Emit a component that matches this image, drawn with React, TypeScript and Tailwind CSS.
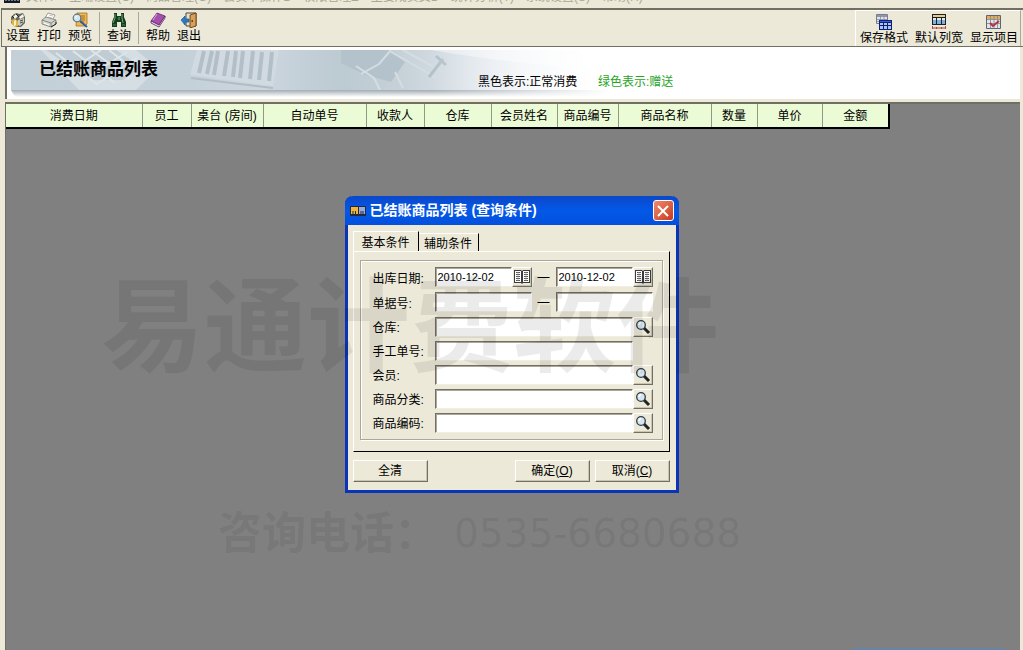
import type { ReactNode } from 'react'

const menus = ['文件F', '主端设置(C)', '商品管理(G)', '会员卡操作B', '权限管理Z', '主要成员费B', '统计分析(T)', '系统设置(S)', '帮助(H)']

const columns = [
  { label: '消费日期', width: 'w-[136px]' },
  { label: '员工', width: 'w-[49px]' },
  { label: '桌台 (房间)', width: 'w-[72px]' },
  { label: '自动单号', width: 'w-[103px]' },
  { label: '收款人', width: 'w-[58px]' },
  { label: '仓库', width: 'w-[67px]' },
  { label: '会员姓名', width: 'w-[66px]' },
  { label: '商品编号', width: 'w-[61px]' },
  { label: '商品名称', width: 'w-[93px]' },
  { label: '数量', width: 'w-[46px]' },
  { label: '单价', width: 'w-[65px]' },
  { label: '金额', width: 'w-[67px]' },
]

const raised =
  'border border-t-white border-l-white border-r-[#716f64] border-b-[#716f64] bg-[#ece9d8] shadow-[inset_-1px_-1px_0_#c9c5b2]'
const sunken =
  'shrink-0 border border-t-[#716f64] border-l-[#716f64] border-r-white border-b-[#f1efe2] bg-white shadow-[inset_1px_1px_0_#aca899] outline-none'

function Icon({ children }: { children: ReactNode }) {
  return (
    <svg viewBox="0 0 16 16" className="size-4 shrink-0" aria-hidden="true">
      {children}
    </svg>
  )
}

function SetupIcon() {
  return (
    <Icon>
      <path d="M1 5 4 2l3-1 2 1 4-1 2 4v6l-4 4H6L1 11z" fill="#66675f" />
      <path d="M3 5 6 2l2 2-3 3zM9 5l4-3 1 3-4 2z" fill="#f4f3e8" />
      <path d="M8 8l6-2v4l-4 4-2-1z" fill="#c9cac2" />
      <path d="M1 8l4-1 3 2v5l-3 1-3-3z" fill="#e0b347" />
      <path d="M4 9l2-1v5l-2 1z" fill="#fff3c4" />
      <path d="M10 9l3-1M10 11l3-1" stroke="#4a4a45" />
      <path d="M2 4l2 2M6 2l3 3" stroke="#222" />
    </Icon>
  )
}

function PrinterIcon() {
  return (
    <Icon>
      <path d="M7 1l7 2-3 6-7-3z" fill="#fff" stroke="#88887e" strokeWidth=".8" />
      <path d="M8 3l4 1M7 5l4 1" stroke="#a9aaa4" strokeWidth=".7" />
      <path d="M1 8l4-3 10 3v4l-5 3L1 12z" fill="#d3d4d0" stroke="#77786f" strokeWidth=".8" />
      <path d="M1 8l9 3 5-3M10 11v4" fill="none" stroke="#77776f" strokeWidth=".8" />
      <path d="M3 11l5 2" stroke="#fff" />
      <path d="M10 15l5-3v-2" fill="none" stroke="#222" />
    </Icon>
  )
}

function PreviewIcon() {
  return (
    <Icon>
      <path d="M5 1h10v11l-2 2H4z" fill="#edb957" stroke="#a8701b" strokeWidth=".8" />
      <path d="M8 4h5M9 6h4M9 8h4M8 10h4" stroke="#8c5b19" strokeWidth=".8" />
      <circle cx="5" cy="6" r="3.8" fill="#cfe9f6" stroke="#66757d" strokeWidth="1.2" />
      <path d="M3 6l2-2" stroke="#fff" />
      <path d="M8 9l7 6" stroke="#285d9e" strokeWidth="2" />
    </Icon>
  )
}

function BinocularsIcon() {
  return (
    <Icon>
      <path d="M3 1h3v3h4V1h3v4l2 5v5h-5v-5H6v5H1v-5l2-5z" fill="#173d20" />
      <path d="M4 2v4L2 11M11 2v4l1 5" fill="none" stroke="#6fae72" />
      <path d="M7 5h2v3H7z" fill="#3f7a46" />
      <path d="M2 13h3M11 13h3" stroke="#4c8652" />
    </Icon>
  )
}

function BookIcon() {
  return (
    <Icon>
      <path d="M7 1l8 3-6 9-8-4z" fill="#a550ae" stroke="#65246d" strokeWidth=".8" />
      <path d="M7 2l-4 6" stroke="#dba2df" />
      <path d="M1 9l8 4 6-9v2l-6 9-8-4z" fill="#f2e9ef" stroke="#501b57" strokeWidth=".8" />
    </Icon>
  )
}

function ExitIcon() {
  return (
    <Icon>
      <path d="M5 1h10v13H5z" fill="#e8e4d2" stroke="#444" />
      <path d="M9 3l6-2v13l-6 2z" fill="#d9a05c" stroke="#6c3e0d" strokeWidth=".9" />
      <path d="M10.5 9h1.5" stroke="#46280a" strokeWidth="1.3" />
      <path d="M0 8l4-4v3h4v3H4v3z" fill="#2a7fc9" stroke="#154b82" strokeWidth=".6" />
    </Icon>
  )
}

function SaveFormatIcon() {
  return (
    <Icon>
      <path d="M.5 .5h11v9H.5z" fill="#dfe3ec" stroke="#777d8c" />
      <path d="M1 1h10v2H1z" fill="#8e97ab" />
      <path d="M1 5.500h10M1 7.500h10M4.500 2v7M8 2v7" stroke="#858c9b" strokeWidth=".8" />
      <path d="M3 6h13v10H3z" fill="#10206f" />
      <path d="M4 9h3v2H4zM8 9h3v2H8zM12 9h3v2h-3zM4 12h3v3H4zM8 12h3v3H8zM12 12h3v3h-3z" fill="#a9c5ff" />
      <path d="M4 7h11v1H4z" fill="#3b59d8" />
    </Icon>
  )
}

function ColumnWidthIcon() {
  return (
    <Icon>
      <path d="M1 0h14v11H1z" fill="#18202b" />
      <path d="M2 1h12v2H2z" fill="#e9cc74" />
      <path d="M2 4h3v2H2zM6 4h4v2H6zM11 4h3v2h-3z" fill="#dce9f3" />
      <path d="M2 6h3v4H2zM6 6h4v4H6zM11 6h3v4h-3z" fill="#82b0d5" />
      <path d="M1.500 12v3M14.500 12v3M2 14h12M5.500 13v2M10.500 13v2" stroke="#a54b43" fill="none" />
    </Icon>
  )
}

function ShowItemsIcon() {
  return (
    <Icon>
      <path d="M.5 1.500h14v13H.5z" fill="#dde5ea" stroke="#5b6773" />
      <path d="M1 2h13v3H1z" fill="#e4ac55" />
      <path d="M1 5.500h13M1 9.500h13M4.500 2v12M8 2v12M11.500 2v12" stroke="#7c8893" strokeWidth=".8" />
      <path d="M4 9l3 3 6-5" fill="none" stroke="#b92d3e" strokeWidth="2" />
    </Icon>
  )
}

function LensIcon() {
  return (
    <Icon>
      <path d="M9 9l5 5" stroke="#222" strokeWidth="3" />
      <circle cx="6" cy="6" r="4.300" fill="#d3e6f2" stroke="#353b42" strokeWidth="1.300" />
      <path d="M4 6q0-2 2-2.500" fill="none" stroke="#fff" strokeWidth="1.300" />
    </Icon>
  )
}

function LedgerIcon() {
  return (
    <Icon>
      <path d="M0 1h7l1 1 1-1h7v13H9l-1 1-1-1H0z" fill="#3b3b3b" />
      <path d="M1 2h6v11H1zM9 2h6v11H9z" fill="#fff" />
      <path d="M2 3.500h4M2 5.500h4M2 7.500h4M2 9.500h4M2 11.500h4M10 3.500h4M10 5.500h4M10 7.500h4M10 9.500h4M10 11.500h4" stroke="#555" />
      <path d="M4 3v9M12 3v9" stroke="#9d9d9d" strokeWidth=".7" />
    </Icon>
  )
}

function ToolButton({ label, icon }: { label: string; icon: ReactNode }) {
  return (
    <button type="button" className="flex shrink-0 flex-col items-center whitespace-nowrap leading-4">
      {icon}
      {label}
    </button>
  )
}

const Separator = () => <div className="h-8 w-px bg-[#aca899]" />

function BannerArt() {
  return (
    <svg viewBox="0 0 600 47" preserveAspectRatio="none" className="h-[47px] w-[600px]" aria-hidden="true">
      <defs>
        <linearGradient id="base" x1="0" x2="1">
          <stop offset="0" stopColor="#c3d0d7" />
          <stop offset=".3" stopColor="#c5d1d8" />
          <stop offset=".42" stopColor="#ccd6df" />
          <stop offset=".55" stopColor="#bccad2" />
          <stop offset=".65" stopColor="#c6d1d8" />
          <stop offset=".8" stopColor="#e2e8ee" />
          <stop offset="1" stopColor="#fff" />
        </linearGradient>
        <linearGradient id="shadow" y1="0" y2="1" x1="0" x2="0">
          <stop offset="0" stopColor="#a3adb3" />
          <stop offset="1" stopColor="#fff" />
        </linearGradient>
        <linearGradient id="fade" x1="0" x2="1">
          <stop offset=".7" stopColor="#fff" stopOpacity="0" />
          <stop offset="1" stopColor="#fff" />
        </linearGradient>
      </defs>
      <path d="M0 0h600v40H0z" fill="url(#base)" />
      <path d="M30 0h95l22 18-22 22H68z" fill="#d5dee3" />
      <path d="M35 0h70l25 17-18 13H78z" fill="#c0ccd3" />
      <path d="M45 3l42 32M62 1l42 32M80 0l38 28M98 0l28 22M60 20L90 0M72 30l44-28M86 34l40-26" stroke="#dde5e9" strokeWidth="2" fill="none" />
      <path d="M186 0l-7 25 83 11 6-36z" fill="#d0dae0" />
      <path
        d="M193 1l-5 22M201 1l-5 23M207 1l-4 24M217 1l-4 25M225 1l-3 26M232 1l-3 27M242 1l-3 28M251 2l-3 28M261 2l-3 29"
        stroke="#b3bfc7"
        strokeWidth="4"
        fill="none"
      />
      <path d="M180 28l82 10" stroke="#b0bdc5" strokeWidth="2" />
      <path d="M330 0h48l16 12-14 20-25-7-25-12z" fill="#b4c2cb" />
      <path d="M350 24l18-10 12-14M345 16l18 12 6 12M380 2l46 26M392 0l40 22M384 22l8 16" stroke="#d3dde2" strokeWidth="2" fill="none" />
      <path d="M432 9l-14 18M425 6l10 9" stroke="#b3c1c9" strokeWidth="3" />
      <path d="M420 0h180v20Q500 14 420 0z" fill="#fff" opacity=".4" />
      <path d="M0 40h600v7H4z" fill="url(#shadow)" />
      <path d="M0 0h600v47H0z" fill="url(#fade)" />
    </svg>
  )
}

function Label({ htmlFor, children }: { htmlFor: string; children: ReactNode }) {
  return (
    <label htmlFor={htmlFor} className="w-[62px] shrink-0 self-end whitespace-nowrap leading-[18px]">
      {children}
    </label>
  )
}

function PickButton({ label, children }: { label: string; children: ReactNode }) {
  return (
    <button type="button" aria-label={label} className={`flex size-5 shrink-0 items-center justify-center ${raised}`}>
      {children}
    </button>
  )
}

function DateInput({ id, label }: { id: string; label: string }) {
  return (
    <div className="flex">
      <input id={id} aria-label={label} defaultValue="2010-12-02" className={`h-5 w-[77px] pl-0.5 text-[11px] ${sunken}`} />
      <PickButton label="选择日期">
        <LedgerIcon />
      </PickButton>
    </div>
  )
}

const fields = [
  { id: 'warehouse', label: '仓库:', lookup: true },
  { id: 'manual-no', label: '手工单号:', lookup: false },
  { id: 'member', label: '会员:', lookup: true },
  { id: 'category', label: '商品分类:', lookup: true },
  { id: 'code', label: '商品编码:', lookup: true },
]

function QueryDialog() {
  return (
    <section
      role="dialog"
      aria-labelledby="query-title"
      className="absolute inset-x-0 top-[196px] mx-auto w-[334px] rounded-t-lg border-x-[3px] border-b-[3px] border-[#0b35b8] bg-[#ece9d8]"
    >
      <header className="-mx-[3px] flex h-[29px] items-center gap-1 rounded-t-lg bg-linear-to-b from-[#0a48c9] via-[#0458e8] to-[#0350dd] pr-[5px] pl-[5px] text-white">
        <svg viewBox="0 0 16 10" className="h-2.5 w-4" aria-hidden="true">
          <path d="M0 0h16v10H0z" fill="#222a3c" />
          <path d="M1 1h7v7H1z" fill="#f2b53a" />
          <path d="M9 1h6v7H9z" fill="#98a9dc" />
          <path d="M3 5v3M5.500 5v3M11 5v3M13 5v3" stroke="#222a3c" />
        </svg>
        <h2 id="query-title" className="flex-1 whitespace-nowrap text-[14px] font-bold">
          已结账商品列表 (查询条件)
        </h2>
        <button
          type="button"
          aria-label="关闭"
          className="flex size-[21px] items-center justify-center rounded-[3px] border border-white bg-linear-to-br from-[#ee8a6c] to-[#c8361a]"
        >
          <svg viewBox="0 0 12 12" className="size-3" aria-hidden="true">
            <path d="M1 1l10 10M11 1L1 11" stroke="#fff" strokeWidth="2" />
          </svg>
        </button>
      </header>

      <form className="pt-1.5 pr-1.5 pb-2 pl-[5px]">
        <div role="tablist" className="flex h-5 items-end">
          <button type="button" role="tab" aria-selected="true" className="h-5 w-[66px] border-t border-r border-l border-t-white border-r-black border-l-white leading-[22px]">
            基本条件
          </button>
          <button type="button" role="tab" aria-selected="false" className="h-[18px] w-[60px] border-t border-r border-t-white border-r-black leading-[20px]">
            辅助条件
          </button>
        </div>

        <div className="border border-t-white border-r-black border-b-black border-l-white px-1.5 pt-2 pb-[11px]">
          <div className="flex flex-col gap-1 border border-[#aca899] py-[6px] pr-[9px] pl-3 shadow-[1px_1px_0_#fff,inset_1px_1px_0_#fff]">
            <div className="flex h-[21px] items-start">
              <Label htmlFor="date-from">出库日期:</Label>
              <DateInput id="date-from" label="出库日期起" />
              <span className="w-6 text-center leading-5">—</span>
              <DateInput id="date-to" label="出库日期止" />
            </div>
            <div className="flex h-[21px] items-start">
              <Label htmlFor="bill-from">单据号:</Label>
              <input id="bill-from" className={`h-5 w-[97px] ${sunken}`} />
              <span className="w-6 text-center leading-5">—</span>
              <input aria-label="单据号止" className={`h-5 w-[97px] ${sunken}`} />
            </div>
            {fields.map(field => (
              <div key={field.id} className="flex h-5 items-center">
                <Label htmlFor={field.id}>{field.label}</Label>
                <input id={field.id} className={`h-5 w-[198px] ${sunken}`} />
                {field.lookup && (
                  <PickButton label="查找">
                    <LensIcon />
                  </PickButton>
                )}
              </div>
            ))}
          </div>
        </div>

        <div className="flex gap-[5px] pt-2">
          <button type="button" className={`mr-auto h-[22px] w-[75px] ${raised}`}>全清</button>
          <button type="submit" className={`h-[22px] w-[75px] ${raised}`}>确定(<u>O</u>)</button>
          <button type="button" className={`h-[22px] w-[75px] ${raised}`}>取消(<u>C</u>)</button>
        </div>
      </form>
    </section>
  )
}

export default function App() {
  return (
    <div className="relative flex h-screen flex-col overflow-hidden bg-[#ece9d8] font-['Liberation_Sans','Noto_Sans_CJK_SC',sans-serif] text-xs text-black">
      <nav className="flex h-2 shrink-0 items-end gap-3 overflow-hidden pb-[3px] pl-1 whitespace-nowrap text-[#aca899]">
        <svg viewBox="0 0 16 16" className="-mr-1.5 size-4 shrink-0" aria-hidden="true">
          <path d="M0 8h16v6H0z" fill="#111827" />
          <path d="M2 10v2M5 10v2M8 10v2M11 10v2M14 10v2" stroke="#d5dbe5" />
        </svg>
        {menus.map(menu => (
          <a key={menu} href="#" className="leading-4">
            {menu}
          </a>
        ))}
      </nav>

      <div className="ml-px flex h-[39px] shrink-0 items-stretch justify-between border-t-2 border-b border-l border-[#716f64] pr-0.5 pl-1">
        <div className="flex items-start gap-[7px] pt-0.5">
          <ToolButton label="设置" icon={<SetupIcon />} />
          <ToolButton label="打印" icon={<PrinterIcon />} />
          <ToolButton label="预览" icon={<PreviewIcon />} />
          <Separator />
          <ToolButton label="查询" icon={<BinocularsIcon />} />
          <Separator />
          <ToolButton label="帮助" icon={<BookIcon />} />
          <ToolButton label="退出" icon={<ExitIcon />} />
        </div>
        <div className="flex items-start gap-[7px] border-t border-r border-l border-t-white border-r-[#aca899] border-l-white pt-[3px] pr-0.5 pl-1">
          <ToolButton label="保存格式" icon={<SaveFormatIcon />} />
          <ToolButton label="默认列宽" icon={<ColumnWidthIcon />} />
          <ToolButton label="显示项目" icon={<ShowItemsIcon />} />
        </div>
      </div>

      <header className="mr-[3px] ml-[5px] grid h-[52px] shrink-0 border-l-2 border-[#716f64] bg-white pt-[3px] pl-1">
        <div className="col-start-1 row-start-1">
          <BannerArt />
        </div>
        <div className="col-start-1 row-start-1 flex items-start pl-7">
          <h1 className="w-[439px] pt-2 text-[17px] leading-6 font-bold">已结账商品列表</h1>
          <p className="w-[120px] pt-6 leading-4">黑色表示:正常消费</p>
          <p className="pt-6 leading-4 text-[#1fa51f]">绿色表示:赠送</p>
        </div>
      </header>

      <main className="mt-[3px] mr-[3px] ml-[5px] flex flex-1 flex-col items-start justify-between border-t-2 border-l border-[#716f64] bg-[#808080]">
        <table className="table-fixed border-collapse border-r-2 border-b-2 border-black bg-[#ebfbd5]">
          <thead>
            <tr className="h-6">
              {columns.map(column => (
                <th key={column.label} className={`border-r border-[#8f9a80] p-0 font-normal whitespace-nowrap ${column.width}`}>
                  {column.label}
                </th>
              ))}
            </tr>
          </thead>
        </table>
        <div className="mr-4 h-0.5 w-[150px] self-end bg-[#6785a8]" />
      </main>

      <QueryDialog />

      {/* Watermark */}
      <div className="pointer-events-none absolute top-[277px] left-[101px] whitespace-nowrap text-black/8">
        <p className="text-[103px] leading-[104px] font-bold">易通计费软件</p>
      </div>
      <div className="pointer-events-none absolute top-[506px] left-[218px] flex items-center gap-4 whitespace-nowrap text-black/8">
        <p className="text-[44px] leading-[56px] font-bold">咨询电话：</p>
        <p className="font-['DejaVu_Sans',sans-serif] text-[39px] leading-[52px]">0535-6680688</p>
      </div>
    </div>
  )
}
